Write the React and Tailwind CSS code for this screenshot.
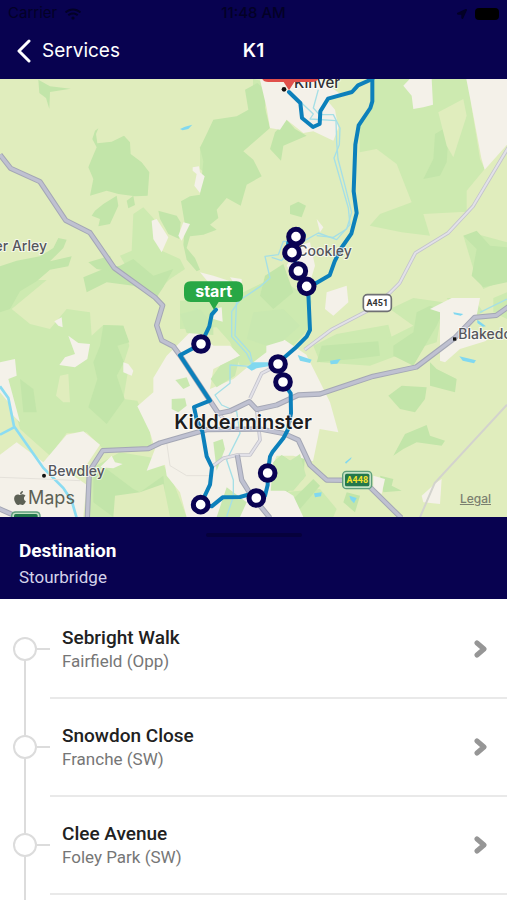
import React from "react";
import { FaApple, FaLocationArrow, FaWifi } from "react-icons/fa";

const stops = [
  { name: "Sebright Walk", area: "Fairfield (Opp)" },
  { name: "Snowdon Close", area: "Franche (SW)" },
  { name: "Clee Avenue", area: "Foley Park (SW)" },
];

const markers = [
  [603, 795],
  [602, 1277],
  [769, 1257],
  [803, 1182],
  [849, 909],
  [834, 855],
  [888, 473],
  [876, 521],
  [895, 576],
  [920, 622],
];

const fields = [
  "M0 603H140L35 690L90 735L150 750L200 690L270 700L275 770L310 738L370 740L388 800L372 850L385 870L370 960L412 965L450 1057L455 1100L310 1110L260 1060L200 1062L150 1130L60 1050L20 907L0 890Z",
  "M400 405L430 385L462 420L485 515L540 540L555 570L510 600L470 640L400 600L360 530L395 515Z",
  "M640 135L600 205L600 270L640 300L720 200L700 120Z",
  "M1079 130L1111 87L1117 0L1410 0L1414 80L1440 240L1454 270L1400 335L1400 398L1270 405L1290 470L1205 460L1109 440L1140 405L1235 370L1190 255L1130 210L1079 220Z",
  "M0 450L25 405L10 432Z",
  "M540 665L640 660L730 640L830 590L900 640L935 665L925 750L880 800L800 850L720 860L690 790L650 745L540 750Z",
  "M940 800L1010 765L1165 737L1190 830L1110 860L960 850Z",
  "M1390 470L1430 465L1521 490V600L1450 630L1420 570Z",
  "M1480 657L1521 640V720L1480 700Z",
  "M1170 690L1240 657L1330 670L1310 790L1180 830L1160 780L1240 740Z",
  "M270 1170L360 1120L480 1140L520 1210L560 1314L270 1314Z",
  "M759 0L787 6L800 120L759 190Z",
  "M1340 657L1420 657L1450 700L1400 720Z",
  "M850 1240L960 1230L1010 1290L1000 1314H900Z",
];

const forests = [
  "M275 240L290 205L277 180L285 155L295 148L288 165L292 193L335 188L372 170L390 190L392 225L425 250L448 280L443 350L405 352L355 345L320 335L270 350L280 300L265 265Z",
  "M350 350L355 380L330 435L295 442L300 420L275 410L285 395L310 375Z",
  "M380 365L400 350L405 378L385 388Z",
  "M115 2L150 22L212 29L150 39L148 90L138 57L118 42Z",
  "M475 395L530 410L542 430L538 480L505 465L480 420Z",
  "M0 562L50 545L120 532L160 507L175 477L200 482L190 507L150 547L215 532L205 562L150 572L110 607L60 637L30 690L0 700Z",
  "M735 32L772 12L800 37L795 87L810 147L730 217L760 242L785 292L740 317L722 380L680 357L650 392L655 417L630 437L650 452L610 467L570 472L560 507L585 537L600 572L590 577L560 542L550 497L555 437L543 367L570 352L600 347L610 247L600 207L640 122L710 112L745 92Z",
  "M250 595L310 570L360 560L400 540L460 590L520 570L490 625L470 655L400 620L320 610L260 640Z",
  "M265 550L330 530L350 580L290 570Z",
  "M310 738L370 740L388 790L352 800L372 850L350 890L374 960L320 1035L265 985L292 900L280 850L300 800Z",
  "M60 900L100 930L110 1000L70 1000Z",
  "M810 210L825 160L860 122L885 150L920 170L850 200L843 245Z",
  "M870 380L895 368L918 380L905 415L870 405Z",
  "M795 590L850 555L880 640L820 690L780 650Z",
  "M1305 165L1335 147L1345 180L1340 250L1320 290L1270 300L1300 240Z",
  "M1390 470L1430 455L1470 500L1521 505V610L1450 625L1415 590L1430 510Z",
  "M1250 700L1290 680L1330 695L1310 740L1275 800L1240 860L1180 830L1180 800L1240 760Z",
  "M965 800L1135 787L1140 830L1060 840L950 850Z",
  "M1165 950L1205 920L1280 925L1275 960L1245 1000L1200 990Z",
  "M1290 850L1310 870L1370 900L1365 940L1290 920Z",
  "M1180 1130L1215 1065L1280 1038L1290 1070L1335 1085L1325 1100L1250 1090L1210 1110Z",
  "M820 1150L845 1128L870 1145L915 1130L910 1200L855 1245L812 1235Z",
  "M1140 1190L1180 1200L1175 1220L1205 1235L1150 1240Z",
  "M1040 1240L1080 1250L1065 1300L1030 1270Z",
  "M280 1180L320 1170L400 1230L420 1240L490 1190L500 1300L450 1314L340 1314L280 1270Z",
  "M30 1130L60 1120L90 1180L50 1200Z",
  "M0 1210L30 1230L50 1280L0 1270Z",
  "M870 1270L940 1200L960 1220L900 1290Z",
];

const lightFields = [
  "M180 890L205 885L210 970L190 970L168 950Z",
  "M0 965L25 975L38 1040L20 1055L0 1060Z",
  "M340 1314L345 1250L420 1240L490 1215L510 1314Z",
  "M1315 100L1390 60L1400 110L1360 235L1340 200Z",
];

const towns = [
  "M780 2L800 87L810 147L840 152L860 122L910 162L940 157L1000 185L1015 147L1005 92L980 62L1030 52L1010 37L960 2Z",
  "M1399 0L1414 77L1444 237L1454 272L1521 197V0Z",
  "M1229 0L1295 0L1299 77L1270 85L1240 90L1235 50L1210 20Z",
  "M500 830L530 800L580 750L640 800L690 800L720 830L640 870L630 930L700 900L760 850L799 820L799 777L830 770L850 780L919 827L959 907L990 970L1015 1060L959 1050L939 1147L880 1130L830 1130L800 1200L880 1250L910 1314L560 1314L540 1240L500 1190L495 1157L440 1175L465 1110L450 1060L412 982L460 940L460 897Z",
  "M0 1127L50 1090L130 1150L200 1067L250 1057L300 1097L260 1157L200 1177L260 1217L250 1314L0 1314Z",
  "M0 850L45 840L50 890L25 900L60 1030L40 1010L25 970L0 940Z",
  "M205 770L235 792L270 795L262 840L225 865L178 858L195 835L225 825Z",
  "M163 727L185 715L188 745L175 740Z",
  "M370 850L385 855L400 875L395 890L370 880Z",
  "M455 425L470 420L505 475L485 520L460 480Z",
  "M550 430L570 435L545 485L535 470Z",
  "M578 265L597 262L600 280L614 292L600 342L583 320L590 285L578 275Z",
  "M600 580L640 590L700 610L690 595L725 600V660L650 640Z",
  "M640 690L665 685L668 728L640 720Z",
  "M895 500L930 490L945 560L930 610L880 590L860 560Z",
  "M950 420L970 445L960 460Z",
  "M980 640L1040 620L1045 670L1000 710L975 690Z",
  "M1290 690L1355 657L1440 657L1430 710L1400 740L1460 785L1380 810L1335 850L1320 845L1320 790L1320 700Z",
  "M1265 1250L1310 1210L1325 1200L1320 1275L1270 1270Z",
  "M300 1165L335 1130L345 1150L368 1155L340 1168Z",
  "M1120 1190L1155 1200L1145 1245L1120 1230Z",
  "M832 740L842 740L848 790L830 790Z",
];

const townParks = [
  "M820 1150L845 1128L870 1145L900 1125L918 1190L880 1235L812 1235Z",
  "M515 960L555 958L560 980L535 1000L515 990Z",
  "M632 900L660 860L720 830L705 890L650 925Z",
  "M640 1090L668 1080L675 1110L650 1175Z",
  "M526 903L560 895L570 920L550 930Z",
  "M540 705L600 690L640 740L640 768L560 762Z",
  "M760 700L850 690L900 740L850 785L800 800L740 780Z",
  "M680 1225L740 1270L720 1314H650Z",
];

const rivers = [
  "M955 32L940 87L958 107L1000 107L1020 147L1018 197L1002 237L1025 317L1045 387L1050 437L1010 482L955 462L910 487L850 487L835 527L795 532L810 597L780 623L720 663L695 698L695 773L740 823L760 863L690 858L690 913L645 948L665 978L710 998L720 1063L680 1143L700 1203L700 1253L680 1313",
  "M905 72L940 105L930 120L1008 125L1010 190L1014 240L1035 320L1055 400L1040 450L1000 475L950 470",
  "M860 480L880 500L845 545L815 535",
  "M710 660L705 770L750 820L760 863",
  "M1521 660L1440 700",
];

const mainRoads = [
  "M0 227L32 268L120 308L197 424L270 461L343 567L465 655L488 679L470 739L485 784L520 802L540 829L630 965L655 1003L690 996L748 968L770 991L830 978L895 948L960 945L1119 892L1249 864L1364 777L1424 715L1489 709L1530 680",
  "M262 1317L268 1177L308 1115L445 1109L480 1092L620 1052L780 1050L850 1063L895 1083L930 1158L980 1203L1090 1205L1204 1317",
  "M712 1128L725 1203L750 1243L810 1317",
  "M-5 1288L60 1317",
];

const minorRoads = [
  "M834 858L785 883L750 958",
  "M770 991L780 1083L750 1128L712 1128L670 1138L636 1163",
  "M655 1003L700 1050L780 1050",
  "M914 812L994 752L1099 697L1169 642L1199 612L1246 522L1344 462L1419 382L1525 205",
];

const route =
  "M648 692L635 707L628 742L603 795L575 810L540 829L630 965L582 984L590 1022L607 1057L620 1132L636 1165L630 1217L602 1277L635 1282L668 1255L720 1254L769 1240L795 1250L803 1218L803 1182L810 1133L818 1118L850 1078L863 1053L873 1003L872 943L849 909L834 855L850 838L885 808L920 773L930 753L925 643L920 622L949 612L989 589L1004 547L1024 507L1054 464L1070 402L1061 337L1066 197L1076 139L1111 87L1117 67V-5";

const RouteMap = () => (
  <svg viewBox="0 0 1521 1314" className="block w-full font-[Inter,sans-serif]" role="img" aria-label="Route map">
    <rect width="1521" height="1314" fill="#e0edbd" />
    <g fill="#cdeab0">{fields.map((d) => <path key={d} d={d} />)}</g>
    <g fill="#c2e5a9">{forests.map((d) => <path key={d} d={d} />)}</g>
    <g fill="#e0edbd">{lightFields.map((d) => <path key={d} d={d} />)}</g>
    <g fill="#f4f1e9">{towns.map((d) => <path key={d} d={d} />)}</g>
    <g fill="#c9e8b0">{townParks.map((d) => <path key={d} d={d} />)}</g>

    {/* water */}
    <g fill="none" stroke="#a5dfe6" strokeWidth="4" strokeLinejoin="round">
      {rivers.map((d) => <path key={d} d={d} />)}
    </g>
    <path d="M0 922L25 957L42 1042L130 1167L190 1227L215 1265L230 1317M0 1067L42 1045" fill="none" stroke="#8bdcf2" strokeWidth="8" />
    <g fill="#80d8f0">
      <path d="M540 150L555 143L577 137L565 150L548 154Z" />
      <path d="M740 865L760 850L805 850L805 862L770 868L755 875Z" />
      <path d="M893 828L935 842L930 852L900 845Z" />
      <path d="M990 845L1022 840L1012 854L992 856Z" />
      <path d="M1378 832L1428 844L1422 853L1388 845Z" />
      <path d="M1360 700L1390 705L1382 710L1362 706Z" />
      <path d="M1432 722L1458 742L1448 743L1432 732Z" />
      <path d="M1035 1150L1055 1134L1053 1140L1038 1154Z" />
      <path d="M942 1243L965 1240L963 1252L945 1255Z" />
      <path d="M1048 1250L1070 1257L1062 1273L1052 1262Z" />
    </g>

    {/* roads */}
    <path d="M1521 977L1304 1212L1259 1317" fill="none" stroke="#d3d3cd" strokeWidth="6" />
    <path d="M0 1195L130 1200L240 1205M500 1090L510 1160L560 1190L640 1190" fill="none" stroke="#e4e1da" strokeWidth="3" />
    <g fill="none" strokeLinejoin="round">
      <g stroke="#c3c3cc" strokeWidth="11">{minorRoads.map((d) => <path key={d} d={d} />)}</g>
      <g stroke="#e2e1e8" strokeWidth="6">{minorRoads.map((d) => <path key={d} d={d} />)}</g>
      <g stroke="#a4a7b5" strokeWidth="16">{mainRoads.map((d) => <path key={d} d={d} />)}</g>
      <g stroke="#bfc1d1" strokeWidth="10">{mainRoads.map((d) => <path key={d} d={d} />)}</g>
    </g>

    {/* bus route */}
    <g fill="none" stroke="#0c80bb" strokeWidth="12" strokeLinejoin="round" strokeLinecap="round">
      <path d={route} />
      <path d="M920 622L895 576L876 521L888 473L865 490L862 510M895 450L912 468" />
      <path d="M867 39L901 72L906 117L939 144L959 135L961 97L984 59L1056 39L1074 19L1117 0" />
    </g>

    {/* place names */}
    <g fill="#55565c" stroke="#ffffff" strokeOpacity="0.7" strokeWidth="6" paintOrder="stroke" strokeLinejoin="round" fontSize="42" fontWeight="500">
      <text x="141" y="517" textAnchor="end">Upper Arley</text>
      <text x="892" y="531">Cookley</text>
      <text x="1375" y="780">Blakedown</text>
      <text x="144" y="1191">Bewdley</text>
      <text x="882" y="26" fontSize="45" fill="#303034">Kinver</text>
      <text x="523" y="1050" fontSize="60" fontWeight="600" fill="#1c1c1e">Kidderminster</text>
    </g>
    <g fill="#111111">
      <circle cx="852" cy="31" r="7" />
      <rect x="1359" y="775" width="10" height="10" />
      <circle cx="132" cy="1190" r="6" />
    </g>

    {/* road shields */}
    <g fontFamily="Roboto" fontWeight="700" fontSize="27" textAnchor="middle">
      <rect x="1090" y="647" width="84" height="50" rx="12" fill="#ffffff" stroke="#6f7074" strokeWidth="5" />
      <text x="1132" y="682" fill="#333333">A451</text>
      <rect x="1026" y="1175" width="91" height="56" rx="13" fill="#5f9f7c" />
      <rect x="1030" y="1179" width="83" height="48" rx="10" fill="#c4e2c4" />
      <rect x="1035" y="1184" width="73" height="38" rx="5" fill="#23774c" />
      <text x="1072" y="1213" fill="#f4e22c">A448</text>
      <rect x="33" y="1297" width="89" height="56" rx="13" fill="#5f9f7c" />
      <rect x="37" y="1301" width="81" height="48" rx="10" fill="#c4e2c4" />
      <rect x="42" y="1305" width="71" height="38" rx="5" fill="#23774c" />
    </g>

    {/* stops */}
    <g fill="#ffffff" stroke="#0a0353" strokeWidth="15">
      {markers.map(([x, y]) => <circle key={`${x}-${y}`} cx={x} cy={y} r="22" />)}
    </g>

    <path d="M787 0H954Q950 9 936 9H883L867 34L851 9H805Q791 9 787 0Z" fill="#e0504b" />
    <path d="M572 607H709Q729 607 729 627V649Q729 669 709 669H656L642 692L628 669H572Q552 669 552 649V627Q552 607 572 607Z" fill="#28a745" />
    <text x="641" y="655" fontSize="48" fontWeight="700" textAnchor="middle" fill="#ffffff">start</text>
  </svg>
);

const StatusBar = () => (
  <div className="grid grid-cols-3 items-center h-[27px] px-2 text-[15px] text-[#030126]">
    <div className="flex items-center gap-2">
      <span>Carrier</span>
      <FaWifi className="size-4" />
    </div>
    <span className="text-center font-medium">11:48 AM</span>
    <div className="flex items-center justify-end gap-2">
      <FaLocationArrow className="size-2.5" />
      <span className="w-6 h-3 rounded-sm bg-black" />
    </div>
  </div>
);

const StopRow = ({ stop, first }) => (
  <li>
    <button className="flex w-full h-[98px] text-left">
      <span className="flex flex-col items-center w-[50px] shrink-0">
        <span className={`w-[2px] h-9 ${first ? "bg-transparent" : "bg-[#dcdcdc]"}`} />
        <span className="flex items-center w-full">
          <span className="w-[13px]" />
          <span className="size-6 rounded-full border-2 border-[#dcdcdc]" />
          <span className="flex-1 h-[2px] bg-[#dcdcdc]" />
        </span>
        <span className="w-[2px] flex-1 bg-[#dcdcdc]" />
      </span>
      <span className="flex flex-1 items-center h-full border-b-2 border-[#e9e9e9] pl-3 pr-5">
        <span className="flex flex-col flex-1">
          <span className="text-[19px] leading-6 font-medium text-[#212121]">{stop.name}</span>
          <span className="text-[17px] leading-[22px] text-[#767676]">{stop.area}</span>
        </span>
        <svg viewBox="0 0 14 20" className="w-3.5 h-5" fill="none" stroke="#969696" strokeWidth="5" strokeLinecap="round" strokeLinejoin="round">
          <path d="M4 4l7 6-7 6" />
        </svg>
      </span>
    </button>
  </li>
);

const App = () => {
  return (
    <div className="flex flex-col h-screen overflow-hidden bg-white font-[Roboto,sans-serif]">
      <header className="shrink-0 bg-[#080250] font-[Inter,sans-serif]">
        <StatusBar />
        <div className="grid grid-cols-3 items-center h-[52px] px-4 pb-1 text-white">
          <button className="flex items-center gap-2.5 text-[19px]">
            <svg viewBox="0 0 16 24" className="w-4 h-6" fill="none" stroke="currentColor" strokeWidth="3" strokeLinecap="round" strokeLinejoin="round">
              <path d="M13 2L3 12l10 10" />
            </svg>
            Services
          </button>
          <h1 className="text-center text-[19px] font-semibold">K1</h1>
        </div>
      </header>

      <div className="relative shrink-0">
        <RouteMap />
        <div className="absolute left-3 bottom-[7px] flex items-center text-lg leading-6 text-[#5d6155] font-[Inter,sans-serif]">
          <FaApple className="size-4" />
          <span>Maps</span>
        </div>
        <a href="#legal" className="absolute right-4 bottom-2.5 text-xs font-medium underline text-[#7b8070] font-[Inter,sans-serif]">
          Legal
        </a>
      </div>

      <section className="shrink-0 h-[82px] bg-[#080250] px-[19px]">
        <div className="h-5 pt-4">
          <div className="mx-auto w-24 h-1 rounded-full bg-[#06013c]" />
        </div>
        <h2 className="text-[19px] leading-7 font-bold text-white">Destination</h2>
        <p className="text-[17px] leading-6 text-[#d5d3ea]">Stourbridge</p>
      </section>

      <ul className="shrink-0 pt-0.5">
        {stops.map((stop, i) => (
          <StopRow key={stop.name} stop={stop} first={i === 0} />
        ))}
      </ul>
      <div className="flex flex-1 justify-center w-[50px]">
        <div className="w-[2px] bg-[#dcdcdc]" />
      </div>
    </div>
  );
};

export default App;
